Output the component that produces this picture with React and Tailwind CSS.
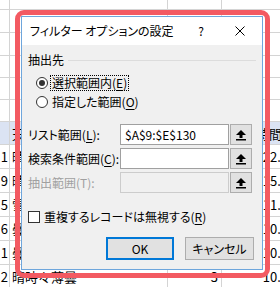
import React from "react";

const rows = [
  { h: "h-[10px]" },
  { h: "h-[23px]" },
  { h: "h-[23px]" },
  { h: "h-[22px]" },
  { h: "h-[22px]" },
  { h: "h-[22px]" },
  { h: "h-[23px]", header: true, a: "", b: "天気", c: "", d: "日照時間" },
  { h: "h-[24px]", a: "1", b: "晴", c: "", d: "22.5" },
  { h: "h-[24px]", a: "9", b: "晴", c: "", d: "15.3" },
  { h: "h-[24px]", a: "5", b: "雪", c: "", d: "11.2" },
  { h: "h-[24px]", a: "6", b: "曇", c: "", d: "10.4" },
  { h: "h-[24px]", a: "1", b: "曇", c: "", d: "10.8" },
  { h: "h-[24px]", a: "2", b: "晴時々薄曇", c: "3", d: "10.1" },
];

function UploadIcon() {
  return (
    <svg width="10" height="12" viewBox="0 0 10 12">
      <polygon points="5,1 10,6 0,6" fill="#000" />
      <rect x="3.5" y="6" width="3" height="3" fill="#000" />
      <rect x="0" y="10" width="10" height="1.5" fill="#000" />
    </svg>
  );
}

function RangeRow({ label, mn, value, disabled }) {
  return (
    <div className="flex items-center h-[21px]">
      <div className={`w-[98px] pl-[6px] leading-[16px] ${disabled ? "text-[#a0a0a0]" : "text-black"}`}>
        {label}(<span className={disabled ? "" : "underline underline-offset-2"}>{mn}</span>):
      </div>
      <div
        className={`w-[109px] h-[21px] border flex items-center pl-[4px] leading-[16px] ${
          disabled ? "bg-[#f0f0f0] border-[#cccccc]" : "bg-white border-[#a0a0a0]"
        }`}
      >
        {value}
      </div>
      <div className="ml-[1px] w-[22px] h-[21px] border border-[#adadad] bg-[#e1e1e1] flex items-center justify-center">
        <UploadIcon />
      </div>
    </div>
  );
}

export default function App() {
  return (
    <div className="relative w-[280px] h-[287px] overflow-hidden bg-white font-['Noto_Sans_CJK_JP',sans-serif]">
      {/* spreadsheet */}
      <div className="flex flex-col w-[290px] text-[13px] text-black">
        {rows.map((r, i) => (
          <div
            key={i}
            className={`grid grid-cols-[10px_158px_54px_68px] border-b border-[#d4d4d4] ${r.h} ${
              r.header ? "bg-[#dbe3f3]" : ""
            }`}
          >
            <div className="border-r border-[#d4d4d4] flex items-center justify-end pr-[1px] leading-none">{r.a}</div>
            <div className="border-r border-[#d4d4d4] flex items-center pl-[2px] leading-none whitespace-nowrap">{r.b}</div>
            <div className="border-r border-[#d4d4d4] flex items-center justify-end pr-[3px] leading-none">{r.c}</div>
            <div className={`flex items-center leading-none whitespace-nowrap ${r.header ? "justify-center" : "justify-end pr-[2px]"}`}>{r.d}</div>
          </div>
        ))}
      </div>

      {/* dialog */}
      <div className="absolute left-[21px] top-[16px] w-[242px] h-[254px] border border-[#6ea6dc] bg-[#f0f0f0] flex flex-col text-[12px] text-black [font-feature-settings:'palt']">
        <div className="h-[28px] bg-white flex items-center pl-[8px] pr-[17px] shrink-0">
          <span className="flex-1 leading-[16px] whitespace-nowrap">フィルター オプションの設定</span>
          <span className="leading-[16px] mr-[31px]">?</span>
          <svg width="10" height="10" viewBox="0 0 10 10">
            <path d="M0.5 0.5 L9.5 9.5 M9.5 0.5 L0.5 9.5" stroke="#000" strokeWidth="1" />
          </svg>
        </div>

        <div className="flex flex-col">
          {/* group label */}
          <div className="mt-[7px] h-[16px] flex items-center pl-[6px] pr-[6px]">
            <span className="leading-[16px]">抽出先</span>
            <div className="flex-1 h-px bg-[#dcdcdc] ml-[4px]" />
          </div>

          {/* radios */}
          <div className="mt-[7px] h-[16px] flex items-center pl-[14px]">
            <div className="w-[12px] h-[12px] rounded-full border border-[#333] bg-white flex items-center justify-center">
              <div className="w-[6px] h-[6px] rounded-full bg-[#333]" />
            </div>
            <div className="ml-[2px] h-[16px] border border-dotted border-black px-[1px] flex items-center leading-[14px]">
              選択範囲内(<span className="underline underline-offset-2">E</span>)
            </div>
          </div>
          <div className="mt-[3px] h-[16px] flex items-center pl-[14px]">
            <div className="w-[12px] h-[12px] rounded-full border border-[#333] bg-white" />
            <div className="ml-[3px] px-[1px] leading-[16px]">
              指定した範囲(<span className="underline underline-offset-2">O</span>)
            </div>
          </div>

          {/* ranges */}
          <div className="mt-[14px] flex flex-col gap-[3px]">
            <RangeRow label="リスト範囲" mn="L" value="$A$9:$E$130" />
            <RangeRow label="検索条件範囲" mn="C" value="" />
            <RangeRow label="抽出範囲" mn="T" value="" disabled />
          </div>

          {/* checkbox */}
          <div className="mt-[16px] h-[16px] flex items-center pl-[6px]">
            <div className="w-[12px] h-[12px] border border-[#333] bg-white" />
            <span className="ml-[4px] leading-[16px]">
              重複するレコードは無視する(<span className="underline underline-offset-2">R</span>)
            </span>
          </div>

          {/* buttons */}
          <div className="mt-[12px] flex justify-end gap-[11px] pr-[8px]">
            <div className="w-[68px] h-[23px] border-2 border-[#0078d7] bg-[#e1e1e1] flex items-center justify-center leading-[16px]">
              OK
            </div>
            <div className="w-[69px] h-[23px] border border-[#adadad] bg-[#e1e1e1] flex items-center justify-center leading-[16px]">
              キャンセル
            </div>
          </div>
        </div>
      </div>

      {/* red annotation */}
      <div className="absolute left-[15px] top-[10px] w-[255px] h-[268px] border-[5px] border-[#f35a62] rounded-[9px]" />
    </div>
  );
}
